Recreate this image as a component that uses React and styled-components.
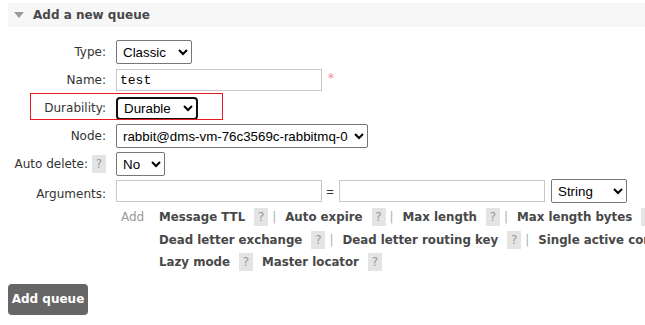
import React from "react";
import styled, { createGlobalStyle } from "styled-components";

const GlobalStyle = createGlobalStyle`
  html, body {
    margin: 0;
    padding: 0;
    overflow: hidden;
    background: #fff;
  }
  body {
    font-family: "DejaVu Sans", Verdana, sans-serif;
    font-size: 12px;
    color: #333;
  }
`;

const Page = styled.div`
  padding: 3px 0 0 8px;
  width: 900px;
`;

const SectionHeader = styled.div`
  display: flex;
  align-items: center;
  height: 24px;
  background: #f7f7f7;
  padding-left: 6px;
  gap: 9px;
`;

const Caret = styled.span`
  width: 0;
  height: 0;
  border-left: 5px solid transparent;
  border-right: 5px solid transparent;
  border-top: 6px solid #9a9a9a;
`;

const Title = styled.h2`
  margin: 0;
  font-size: 12px;
  font-weight: bold;
  color: #484848;
`;

const Form = styled.div`
  margin-top: 11px;
  display: flex;
  flex-direction: column;
`;

const Row = styled.div`
  position: relative;
  display: flex;
  align-items: ${(p) => (p.$top ? "flex-start" : "center")};
  padding-top: ${(p) => (p.$top ? 1 : 0)}px;
  box-sizing: border-box;
  gap: 10px;
  height: 28px;
`;

const Label = styled.label`
  width: 98px;
  display: flex;
  justify-content: flex-end;
  align-items: center;
  white-space: nowrap;
  color: #333;
  padding-top: ${(p) => p.$pt || 0}px;
`;

const Help = styled.span`
  display: inline-flex;
  align-items: center;
  justify-content: center;
  flex: none;
  width: 14px;
  height: 18px;
  background: #e4e4e4;
  color: #999;
  font-size: 12px;
  font-weight: normal;
  margin-left: ${(p) => p.$ml}px;
`;

const Select = styled.select`
  font-family: "Liberation Sans", Arial, sans-serif;
  font-size: 13.33px;
  color: #000;
  height: ${(p) => (p.$focused ? 23 : 24)}px;
  width: ${(p) => p.$w}px;
  border: ${(p) => (p.$focused ? "2px solid #101010" : "1px solid #767676")};
  border-radius: ${(p) => (p.$focused ? 4 : 2)}px;
  background: #fff;
  padding: 0 2px;
  outline: none;
  margin: 0;
`;

const TextInput = styled.input`
  font-family: ${(p) => (p.$mono ? '"Liberation Mono", "Courier New", monospace' : '"Liberation Sans", Arial, sans-serif')};
  font-size: 13px;
  width: 206px;
  height: 22px;
  box-sizing: border-box;
  border: 1px solid #c8c8c8;
  padding: 0 3px;
  margin: 0;
  color: #000;
  outline: none;
`;

const Mandatory = styled.sup`
  color: #f58a9a;
  font-size: 12px;
  margin-left: 6px;
  align-self: flex-start;
  margin-top: 2px;
`;

const Annotation = styled.span`
  position: absolute;
  left: 22px;
  top: -1px;
  width: 191px;
  height: 25px;
  border: 1px solid #e8191e;
  pointer-events: none;
`;

const Equals = styled.span`
  font-family: "Liberation Sans", Arial, sans-serif;
  font-size: 13px;
  color: #333;
  width: 8px;
  text-align: center;
  margin: 0 5px 0 4px;
`;

const Controls = styled.div`
  display: flex;
  align-items: center;
`;

const TypeSelect = styled(Select)`
  margin-left: 6px;
`;

const AddArea = styled.div`
  display: flex;
  padding-left: 108px;
`;

const AddLabel = styled.span`
  width: 38px;
  padding-left: 5px;
  color: #999;
  line-height: 20px;
  padding-top: 1px;
`;

const LinkLines = styled.div`
  display: flex;
  flex-direction: column;
`;

const LinkLine = styled.div`
  height: 22.5px;
  display: flex;
  align-items: center;
  white-space: nowrap;
`;

const ArgLink = styled.span`
  font-weight: bold;
  font-size: 11.8px;
  color: #484848;
`;

const Sep = styled.span`
  color: #a8b0bc;
  margin: 0 9px 0 4px;
`;

const Spacer = styled.span`
  width: 9px;
  flex: none;
`;

const AddButton = styled.button`
  margin-top: 10px;
  width: 80px;
  height: 31px;
  background: #666;
  color: #fff;
  border: none;
  border-radius: 4px;
  font-family: "DejaVu Sans", Verdana, sans-serif;
  font-size: 12px;
  font-weight: bold;
  padding: 0;
`;

const linkRows = [
  { items: ["Message TTL", "Auto expire", "Max length", "Max length bytes", "Overflow behaviour"], bars: true },
  { items: ["Dead letter exchange", "Dead letter routing key", "Single active consumer"], bars: true },
  { items: ["Lazy mode", "Master locator"], bars: false },
];

function Links({ items, bars }) {
  return (
    <LinkLine>
      {items.map((name, i) => (
        <React.Fragment key={name}>
          <ArgLink>{name}</ArgLink>
          <Help $ml={9}>?</Help>
          {i < items.length - 1 && (bars ? <Sep>|</Sep> : <Spacer />)}
        </React.Fragment>
      ))}
    </LinkLine>
  );
}

export default function App() {
  return (
    <>
      <GlobalStyle />
      <Page>
        <SectionHeader>
          <Caret />
          <Title>Add a new queue</Title>
        </SectionHeader>
        <Form>
          <Row>
            <Label>Type:</Label>
            <Select $w={76} defaultValue="classic">
              <option value="classic">Classic</option>
              <option value="quorum">Quorum</option>
            </Select>
          </Row>
          <Row>
            <Label>Name:</Label>
            <Controls>
              <TextInput $mono defaultValue="test" />
              <Mandatory>*</Mandatory>
            </Controls>
          </Row>
          <Row>
            <Annotation />
            <Label>Durability:</Label>
            <Select $w={82} $focused defaultValue="durable">
              <option value="durable">Durable</option>
              <option value="transient">Transient</option>
            </Select>
          </Row>
          <Row>
            <Label>Node:</Label>
            <Select $w={252} defaultValue="n0">
              <option value="n0">rabbit@dms-vm-76c3569c-rabbitmq-0</option>
            </Select>
          </Row>
          <Row>
            <Label>
              Auto delete:
              <Help $ml={4}>?</Help>
            </Label>
            <Select $w={49} defaultValue="no">
              <option value="no">No</option>
              <option value="yes">Yes</option>
            </Select>
          </Row>
          <Row $top>
            <Label $pt={8}>Arguments:</Label>
            <Controls>
              <TextInput />
              <Equals>=</Equals>
              <TextInput />
              <TypeSelect $w={76} defaultValue="string">
                <option value="string">String</option>
                <option value="number">Number</option>
                <option value="boolean">Boolean</option>
              </TypeSelect>
            </Controls>
          </Row>
          <AddArea>
            <AddLabel>Add</AddLabel>
            <LinkLines>
              {linkRows.map((r, i) => (
                <Links key={i} items={r.items} bars={r.bars} />
              ))}
            </LinkLines>
          </AddArea>
        </Form>
        <AddButton>Add queue</AddButton>
      </Page>
    </>
  );
}
